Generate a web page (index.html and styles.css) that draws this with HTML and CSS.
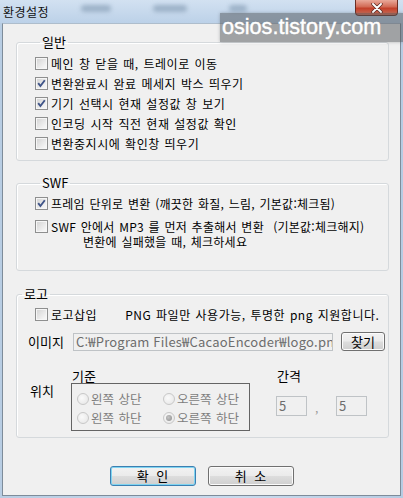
FILE: index.html
```html
<!DOCTYPE html>
<html lang="ko">
<head>
    <meta charset="UTF-8">
    <meta name="viewport" content="width=device-width, initial-scale=1.0">
    <title>환경설정</title>
    <link rel="stylesheet" href="styles.css">
</head>
<body>
    <div class="window">
        <div class="titlebar">
            <span class="title">환경설정</span>
            <span class="haze h1"></span>
            <span class="haze h2"></span>
            <span class="haze h3"></span>
            <span class="close">
                <svg width="14" height="10" viewBox="0 0 14 10">
                    <path d="M3 1 L11 9 M11 1 L3 9" stroke="#5a2a22" stroke-width="3.4" stroke-linecap="round"/>
                    <path d="M3 1 L11 9 M11 1 L3 9" stroke="#ffffff" stroke-width="1.9" stroke-linecap="round"/>
                </svg>
            </span>
        </div>

        <div class="client">
            <fieldset class="group general">
                <legend>일반</legend>
                <label class="check"><span class="cb"></span>메인 창 닫을 때, 트레이로 이동</label>
                <label class="check"><span class="cb on"><svg width="11" height="11" viewBox="0 0 11 11"><path d="M2.2 5.2 L4.4 8 L8.8 2.2" fill="none" stroke="#3f5488" stroke-width="1.9"/></svg></span>변환완료시 완료 메세지 박스 띄우기</label>
                <label class="check"><span class="cb on"><svg width="11" height="11" viewBox="0 0 11 11"><path d="M2.2 5.2 L4.4 8 L8.8 2.2" fill="none" stroke="#3f5488" stroke-width="1.9"/></svg></span>기기 선택시 현재 설정값 창 보기</label>
                <label class="check"><span class="cb"></span>인코딩 시작 직전 현재 설정값 확인</label>
                <label class="check"><span class="cb"></span>변환중지시에 확인창 띄우기</label>
            </fieldset>

            <fieldset class="group swf">
                <legend>SWF</legend>
                <label class="check"><span class="cb on"><svg width="11" height="11" viewBox="0 0 11 11"><path d="M2.2 5.2 L4.4 8 L8.8 2.2" fill="none" stroke="#3f5488" stroke-width="1.9"/></svg></span>프레임 단위로 변환 (깨끗한 화질, 느림, 기본값:체크됨)</label>
                <label class="check multi">
                    <span class="cb"></span>
                    <span class="lines">
                        <span>SWF 안에서 MP3 를 먼저 추출해서 변환 &nbsp;(기본값:체크해지)</span>
                        <span class="indent">변환에 실패했을 때, 체크하세요</span>
                    </span>
                </label>
            </fieldset>

            <fieldset class="group logo">
                <legend>로고</legend>
                <div class="logo-top">
                    <label class="check"><span class="cb"></span>로고삽입</label>
                    <span class="note">PNG 파일만 사용가능, 투명한 png 지원합니다.</span>
                </div>
                <div class="image-row">
                    <span class="row-label">이미지</span>
                    <div class="field path">C:₩Program Files₩CacaoEncoder₩logo.png</div>
                    <button class="btn find">찾기</button>
                </div>
                <div class="pos-row">
                    <span class="pos-label">위치</span>
                    <div class="basis">
                        <div class="sub">기준</div>
                        <div class="radio-box">
                            <span class="radio"><span class="dot"></span>왼쪽 상단</span>
                            <span class="radio"><span class="dot"></span>오른쪽 상단</span>
                            <span class="radio"><span class="dot"></span>왼쪽 하단</span>
                            <span class="radio"><span class="dot on"></span>오른쪽 하단</span>
                        </div>
                    </div>
                    <div class="spacing">
                        <div class="sub">간격</div>
                        <div class="spacing-fields">
                            <span class="field num">5</span>
                            <span class="comma">,</span>
                            <span class="field num">5</span>
                        </div>
                    </div>
                </div>
            </fieldset>

            <div class="actions">
                <button class="btn default">확 인</button>
                <button class="btn">취 소</button>
            </div>
        </div>

        <div class="watermark">osios.tistory.com</div>
    </div>
</body>
</html>
```

FILE: styles.css
```css
body
{
    margin: 0;
    font-family: "Noto Sans CJK KR", "Liberation Sans", sans-serif;
    font-size: 12px;
    color: #000;
    background: #fff;
}
.window
{
    position: relative;
    width: 403px;
    height: 498px;
    display: flex;
    flex-direction: column;
    background: linear-gradient(90deg, #b8cde3, #c9dbee 60%, #b6cbe2);
    overflow: hidden;
}
.titlebar
{
    height: 23px;
    display: flex;
    align-items: center;
    flex: none;
    background: linear-gradient(180deg, #d2e1f1, #bcd1e8);
}
.title
{
    margin-left: 3px;
    line-height: 20px;
    color: #111;
    letter-spacing: 0.5px;
}
.haze
{
    height: 7px;
    margin-top: -6px;
    border-radius: 4px;
    background: #9db2c8;
    filter: blur(2px);
}
.h1 { width: 30px; margin-left: 32px; }
.h2 { width: 34px; margin-left: 42px; }
.h3 { width: 18px; margin-left: 42px; }
.close
{
    margin-left: auto;
    margin-right: 5px;
    align-self: flex-start;
    width: 43px;
    height: 16px;
    box-sizing: border-box;
    display: flex;
    align-items: center;
    justify-content: center;
    border: 1px solid #6b2e24;
    border-top: none;
    border-radius: 0 0 4px 4px;
    background: linear-gradient(180deg, #e9a99a, #d26a55 45%, #c2402a 55%, #d9735c);
}
.client
{
    flex: 1;
    margin: 0 2px 2px 2px;
    border: 1px solid #7e8c9a;
    border-top-color: #aebdcc;
    background: #f0f0f0;
    display: flex;
    flex-direction: column;
}
.group
{
    margin: 0 11px 0 13px;
    padding: 0;
    border: 1px solid #d5d9dc;
    border-radius: 3px;
    box-shadow: inset 1px 1px 0 #fff;
    min-width: 0;
}
.group legend
{
    margin-left: 5px;
    padding: 0 2px;
    line-height: 16px;
    font-size: 13px;
}
.general
{
    margin-top: 10px;
    padding: 3px 0 7px 18px;
}
.swf
{
    margin-top: 14px;
    padding: 2px 0 21px 18px;
}
.swf .check
{
    letter-spacing: 0.25px;
}
.logo
{
    margin-top: 15px;
    padding: 2px 0 6px 0;
}
.check
{
    display: flex;
    align-items: center;
    height: 20px;
    letter-spacing: 0.5px;
    word-spacing: 1px;
    white-space: nowrap;
}
.check.multi
{
    height: auto;
    margin-top: 6px;
    align-items: flex-start;
}
.check.multi .cb
{
    margin-top: 1px;
}
.lines
{
    display: flex;
    flex-direction: column;
    line-height: 15px;
}
.indent
{
    padding-left: 32px;
}
.cb
{
    width: 13px;
    height: 13px;
    box-sizing: border-box;
    flex: none;
    margin-right: 3px;
    border: 1px solid #8e8f8f;
    box-shadow: inset 0 0 0 1px #f6f6f6;
    background: linear-gradient(135deg, #d2d2d2, #f4f4f4 80%);
    display: flex;
    align-items: center;
    justify-content: center;
}
.cb svg
{
    display: block;
}
.logo-top
{
    display: flex;
    align-items: center;
    padding-left: 18px;
}
.note
{
    margin-left: 28px;
    letter-spacing: 0.5px;
    word-spacing: 1px;
    white-space: nowrap;
}
.image-row
{
    display: flex;
    align-items: center;
    margin-top: 8px;
    padding-left: 11px;
}
.row-label
{
    width: 45px;
    font-size: 13px;
}
.field
{
    box-sizing: border-box;
    height: 18px;
    border: 1px solid #bfc3c6;
    background: #f0f0f0;
    color: #6d6d6d;
    line-height: 16px;
    padding-left: 2px;
    overflow: hidden;
    white-space: nowrap;
}
.path
{
    width: 260px;
    font-size: 13px;
    letter-spacing: 0.2px;
}
.btn
{
    font-family: inherit;
    font-size: 12px;
    color: #000;
    box-sizing: border-box;
    height: 20px;
    padding: 0;
    border: 1px solid #707070;
    border-radius: 3px;
    box-shadow: inset 0 0 0 1px #fbfbfb;
    background: linear-gradient(180deg, #f2f2f2, #ebebeb 48%, #dddddd 52%, #cfcfcf);
    line-height: 16px;
}
.find
{
    width: 44px;
    height: 19px;
    margin-left: 8px;
    font-size: 13px;
}
.pos-row
{
    display: flex;
    margin-top: 17px;
    padding-left: 13px;
}
.pos-label
{
    width: 41px;
    margin-top: 15px;
    line-height: 15px;
    font-size: 13px;
}
.sub
{
    line-height: 15px;
    padding-left: 1px;
    font-size: 13px;
}
.radio-box
{
    width: 179px;
    height: 48px;
    box-sizing: border-box;
    border: 1px solid #646464;
    padding: 5px 0 0 5px;
    display: grid;
    grid-template-columns: 86px 1fr;
    grid-auto-rows: 19px;
}
.radio
{
    display: flex;
    align-items: center;
    color: #7d7d7d;
    font-size: 12.5px;
    white-space: nowrap;
    word-spacing: 1px;
}
.dot
{
    width: 12px;
    height: 12px;
    box-sizing: border-box;
    border-radius: 50%;
    border: 1px solid #c8c8c8;
    background: radial-gradient(circle at 40% 40%, #fafafa, #e4e4e4);
    margin-right: 2px;
    flex: none;
    display: flex;
    align-items: center;
    justify-content: center;
}
.dot.on::after
{
    content: "";
    width: 6px;
    height: 6px;
    border-radius: 50%;
    background: radial-gradient(circle at 40% 40%, #c4c4c4, #8d8d8d);
}
.spacing
{
    margin-left: 26px;
}
.spacing-fields
{
    display: flex;
    align-items: flex-end;
    margin-top: 13px;
}
.num
{
    width: 31px;
    height: 20px;
    font-size: 13px;
    line-height: 18px;
}
.comma
{
    width: 29px;
    padding-left: 8px;
    box-sizing: border-box;
    color: #9a9a9a;
    line-height: 16px;
}
.actions
{
    display: flex;
    justify-content: center;
    gap: 12px;
    margin-top: 28px;
}
.actions .btn
{
    width: 86px;
    font-size: 13px;
    word-spacing: 4px;
}
.btn.default
{
    border-color: #3c7fb1;
    box-shadow: inset 0 0 0 1px #7fd4f1;
}
.watermark
{
    position: absolute;
    left: 220px;
    top: 13px;
    width: 183px;
    height: 29px;
    box-sizing: border-box;
    padding-left: 2px;
    background: rgba(80, 84, 88, 0.5);
    box-shadow: 0 0 3px rgba(80, 84, 88, 0.4);
    color: #fff;
    font-family: "Liberation Sans", Arial, sans-serif;
    font-size: 21.6px;
    line-height: 27px;
    -webkit-text-stroke: 0.4px #fff;
}
```
